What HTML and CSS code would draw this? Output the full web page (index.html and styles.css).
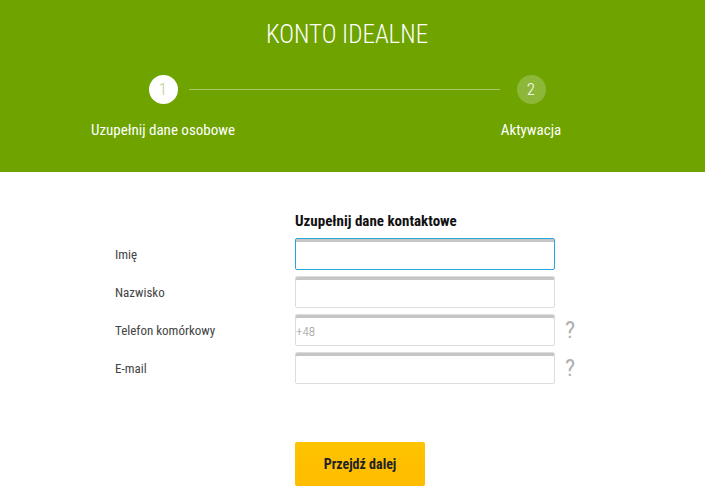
FILE: index.html
```html
<!DOCTYPE html>
<html lang="pl">

<head>
    <meta charset="UTF-8">
    <meta name="viewport" content="width=device-width, initial-scale=1.0">
    <title>Konto Idealne</title>
    <link rel="stylesheet" href="styles.css">
</head>

<body>
    <div class="hero">
        <h1 class="hero-title">KONTO IDEALNE</h1>
        <div class="steps">
            <div class="steps-line"></div>
            <div class="step step-first">
                <span class="step-num step-active">1</span>
                <span class="step-label">Uzupełnij dane osobowe</span>
            </div>
            <div class="step step-last">
                <span class="step-num">2</span>
                <span class="step-label">Aktywacja</span>
            </div>
        </div>
    </div>

    <form class="form">
        <div class="form-head">Uzupełnij dane kontaktowe</div>

        <label class="form-label">Imię</label>
        <input class="form-input is-focus" type="text">
        <span></span>

        <label class="form-label">Nazwisko</label>
        <input class="form-input" type="text">
        <span></span>

        <label class="form-label">Telefon komórkowy</label>
        <input class="form-input" type="text" placeholder="+48">
        <span class="form-help">?</span>

        <label class="form-label">E-mail</label>
        <input class="form-input" type="text">
        <span class="form-help">?</span>

        <div class="form-actions">
            <button class="btn" type="button">Przejdź dalej</button>
        </div>
    </form>
</body>

</html>
```

FILE: styles.css
```css
* {
    padding: 0;
    margin: 0;
    box-sizing: border-box;
}

html,
body {
    width: 100%;
    height: 100%;
    background-color: #fff;
    font-family: "Roboto Condensed", "Liberation Sans Narrow", "DejaVu Sans Condensed", Roboto, sans-serif;
    color: #333;
    overflow: hidden;
}

.hero {
    height: 172px;
    background-color: #6ea300;
    color: #fff;
    padding-top: 20px;
}

.hero-title {
    text-align: center;
    font-size: 25px;
    font-weight: 300;
    line-height: 30px;
    padding-right: 11px;
}

.steps {
    position: relative;
    display: flex;
    justify-content: space-between;
    width: 538px;
    margin: 25px 0 0 78px;
}

/* linia laczaca kroki */
.steps-line {
    position: absolute;
    top: 14px;
    left: 111px;
    right: 116px;
    height: 1px;
    background-color: rgba(255, 255, 255, 0.4);
}

.step {
    width: 170px;
    display: flex;
    flex-direction: column;
    align-items: center;
    position: relative;
}

.step-num {
    width: 29px;
    height: 29px;
    border-radius: 50%;
    background-color: rgba(255, 255, 255, 0.22);
    color: #fff;
    font-size: 17px;
    font-weight: 300;
    line-height: 29px;
    text-align: center;
}

.step-active {
    background-color: #fff;
    color: #b8d08a;
}

.step-label {
    margin-top: 17px;
    font-size: 15px;
    line-height: 18px;
}

.form {
    display: grid;
    grid-template-columns: 180px 260px 30px;
    align-items: center;
    row-gap: 6px;
    margin: 40px 0 0 115px;
}

.form-head {
    grid-column: 2 / 4;
    font-size: 15px;
    font-weight: bold;
    color: #111;
    line-height: 18px;
    margin-bottom: 2px;
}

.form-label {
    font-size: 13px;
    color: #444;
    padding-top: 1px;
}

.form-input {
    height: 32px;
    border: 1px solid #ddd;
    border-radius: 2px;
    box-shadow: inset 0 3px 0 #c6c6c6;
    background-color: #fff;
    font-family: inherit;
    font-size: 13px;
    font-weight: 300;
    padding: 3px 0 0 0;
    outline: none;
}

.form-input::placeholder {
    color: #999;
}

.form-input.is-focus {
    border-color: #27a6dc;
}

.form-help {
    font-size: 24px;
    color: #b0b0b0;
    padding-left: 10px;
    line-height: 24px;
}

.form-actions {
    grid-column: 2 / 4;
    margin-top: 52px;
}

.btn {
    width: 130px;
    height: 44px;
    border: none;
    border-radius: 2px;
    background: linear-gradient(#ffc300, #ffbc00);
    color: #222;
    font-family: inherit;
    font-size: 14px;
    font-weight: bold;
    cursor: pointer;
}
```
